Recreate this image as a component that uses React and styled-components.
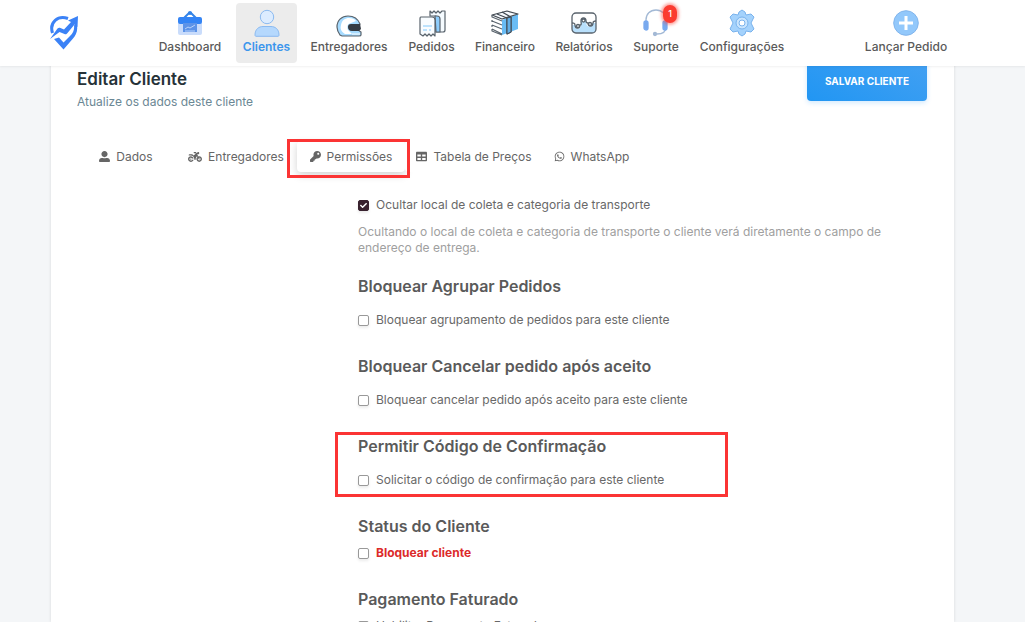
import React from "react";
import { useState } from "react";
import styled, { createGlobalStyle } from "styled-components";
import { FaUserAlt, FaKey, FaTable, FaWhatsapp, FaCheck } from "react-icons/fa";
import { FaMotorcycle } from "react-icons/fa6";

const GlobalStyle = createGlobalStyle`
  * {
    box-sizing: border-box;
  }

  body {
    margin: 0;
    background-color: #f4f6f8;
    color: #5f5f5f;
    font-family: Inter, "Open Sans", sans-serif;
    font-size: 12px;
  }

  h1, h2, p {
    margin: 0;
  }
`;

const Page = styled.div`
  display: flex;
  flex-direction: column;
  height: 100vh;
  overflow: hidden;
`;

const Header = styled.header`
  display: flex;
  flex-shrink: 0;
  align-items: flex-start;
  height: 66px;
  padding: 3px 71px 0 50px;
  background-color: #fff;
  box-shadow: 0 1px 2px rgba(0, 0, 0, 0.06);
  position: relative;
  z-index: 1;
`;

const LogoLink = styled.a`
  display: flex;
  margin: 12px 72px 0 0;
`;

const Menu = styled.nav`
  display: flex;
  flex: 1;
  gap: 6px;
`;

const MenuLink = styled.a`
  display: flex;
  flex-direction: column;
  align-items: center;
  flex: 0 0 ${props => props.$width}px;
  height: 60px;
  padding-top: 6px;
  gap: 1px;
  border-radius: 4px;
  background-color: ${props => (props.$active ? '#ececec' : 'transparent')};
  color: ${props => (props.$active ? '#3c96ec' : '#5a5a5a')};
  font-weight: ${props => (props.$active ? 600 : 500)};
  line-height: 18px;
  text-decoration: none;
  white-space: nowrap;

  &:last-child {
    margin-left: auto;
  }
`;

const IconBox = styled.span`
  display: flex;
  position: relative;
`;

const Badge = styled.span`
  position: absolute;
  top: -4px;
  right: -8px;
  width: 14px;
  height: 18px;
  border-radius: 7px;
  background-color: #fb3b30;
  box-shadow: 0 0 3px 2px rgba(251, 59, 48, 0.45);
  color: #fff;
  font-size: 9px;
  line-height: 18px;
  text-align: center;
`;

const Card = styled.main`
  flex: 1;
  min-height: 0;
  margin: -6px 71px 0 51px;
  padding: 0 27px 0 26px;
  background-color: #fff;
  box-shadow: 0 0 3px rgba(0, 0, 0, 0.12);
`;

const CardHeader = styled.div`
  display: flex;
  justify-content: space-between;
  align-items: flex-start;
`;

const Title = styled.h1`
  padding-top: 7px;
  color: #263238;
  font-size: 17px;
  font-weight: 600;
  line-height: 24px;
`;

const Subtitle = styled.p`
  padding-top: 2px;
  color: #6b8794;
  line-height: 18px;
`;

const SaveButton = styled.button`
  width: 120px;
  height: 41px;
  border: 0;
  border-radius: 4px;
  background: linear-gradient(30deg, #2196f3, #42a0f2);
  box-shadow: 0 2px 5px rgba(33, 150, 243, 0.2);
  color: #fff;
  font-family: inherit;
  font-size: 10px;
  font-weight: 700;
  cursor: pointer;
`;

const Tabs = styled.div`
  display: grid;
  grid-template-columns: 98px 122px 108px 138px 97px;
  margin-top: 30px;
`;

const Tab = styled.button`
  display: flex;
  align-items: center;
  justify-content: center;
  gap: 6px;
  width: 100%;
  height: 31px;
  padding: 0;
  border: 0;
  border-radius: 4px;
  background-color: #fff;
  box-shadow: ${props => (props.$active ? '0 3px 8px rgba(0, 0, 0, 0.18)' : 'none')};
  color: #666;
  font-family: inherit;
  font-size: 12px;
  white-space: nowrap;
  cursor: pointer;
`;

const Marked = styled.div`
  position: relative;
`;

const MarkFrame = styled.span`
  position: absolute;
  z-index: 1;
  inset: ${props => props.$inset};
  width: ${props => props.$width}px;
  border: 3px solid #fb3434;
  pointer-events: none;
`;

const Form = styled.form`
  display: flex;
  flex-direction: column;
  gap: 18px;
  max-width: 840px;
  margin-top: 24px;
  padding-left: 281px;
`;

const Intro = styled.div`
  display: flex;
  flex-direction: column;
  gap: 10px;
`;

const SectionList = styled.div`
  display: flex;
  flex-direction: column;
  gap: 25px;
`;

const Section = styled.section`
  display: flex;
  flex-direction: column;
  align-items: flex-start;
  position: relative;
  gap: ${props => (props.$compact ? 6 : 13)}px;
`;

const SectionTitle = styled.h2`
  color: #5a5a5a;
  font-size: 16px;
  font-weight: 600;
  line-height: 24px;
`;

const Option = styled.label`
  display: flex;
  align-items: center;
  gap: 7px;
  color: ${props => (props.$danger ? '#dc2a2a' : '#686868')};
  font-weight: ${props => (props.$danger ? 700 : 400)};
  line-height: 18px;
`;

const CheckWrap = styled.span`
  display: flex;
  align-items: center;
  justify-content: center;
  position: relative;

  svg {
    position: absolute;
    color: #fff;
    pointer-events: none;
  }
`;

const Checkbox = styled.input`
  appearance: none;
  width: 11px;
  height: 11px;
  margin: 0;
  border: 1px solid #999;
  border-radius: 2px;
  background-color: #fff;
  box-shadow: 0 2px 3px rgba(0, 0, 0, 0.08);

  &:checked {
    border-color: #39222f;
    background-color: #39222f;
  }
`;

const Hint = styled.p`
  color: #a0a0a0;
  line-height: 16px;
`;

function Logo() {
  return (
    <svg width="28" height="35" viewBox="0 0 28 35">
      <path d="M2.500 18C-1 7 8 0 18 3.500" fill="none" stroke="#3b82f6" strokeWidth="3" />
      <path d="M4 24L9 22.500L13.500 27.500L20 21C23.500 17.500 24.500 14 24 10.500L26.500 8C28.500 15 26 20 23 23.500L13.500 34.500Z" fill="#3b82f6" />
      <path d="M0 24L7.500 13.500C8.500 12.500 9.500 12.500 10.500 13L14 14.500L21 7L18 5.500L28 1L27.500 12L24.500 9.500L17.500 18C16.500 19.500 15.500 19.500 14.500 19L9.500 17Z" fill="#3b82f6" />
    </svg>
  );
}

function DashboardIcon() {
  return (
    <svg width="26" height="28" viewBox="0 0 26 28" fill="none">
      <path d="M7 9L12 4H14L19 9" stroke="#3384e8" strokeWidth="2" />
      <circle cx="13" cy="4" r="2" fill="#3384e8" />
      <rect x="1" y="13" width="24" height="13" rx="2" fill="#c9dcfb" />
      <rect x="1" y="8" width="24" height="7" rx="2" fill="#3384f5" />
      <rect x="6" y="14" width="14" height="9" fill="#5c93e8" />
      <path d="M8 20L11 18L13 19L18 16M8 22H18" stroke="#b9d2fa" />
    </svg>
  );
}

function ClientsIcon() {
  return (
    <svg width="26" height="28" viewBox="0 0 26 28" stroke="#8bbaf0">
      <circle cx="13" cy="8" r="6.7" fill="#dcecff" />
      <path d="M1 26C1 20 5 17.500 9 17.500H17C21 17.500 25 20 25 26C25 27 24.500 27.300 24 27.300H2C1.500 27.300 1 27 1 26Z" fill="#b5d8fd" />
    </svg>
  );
}

function HelmetIcon() {
  return (
    <svg width="26" height="28" viewBox="0 0 26 28">
      <path d="M4 26C2 23 1 21 1 18C1 11 6 7 12 7C18 7 22 10 24 15L22 21L25 23V26C25 27 24 27 23 27H6Z" fill="#a6dbff" stroke="#59636c" strokeWidth="1.200" />
      <path d="M5 16C6 11 9 9 13 9C16 9 19 10 20 12L15 14C11 15 11 18 12 21L16 25H9C5 22 4 20 5 16Z" fill="#fff" />
      <path d="M12 18C12 16 13 15 15 15H24L25 20L23 22H16C13 22 12 20 12 18Z" fill="#343b43" />
      <path d="M16 25H24" stroke="#fff" />
    </svg>
  );
}

function OrdersIcon() {
  return (
    <svg width="28" height="28" viewBox="0 0 28 28" strokeWidth="1.200" strokeLinejoin="round">
      <path d="M12 7V2L14 4L16 2L18 4L20 2L22 4L24 2L27 2V21C27 22 26 23 25 23H18V7Z" fill="#f5fbff" stroke="#59636c" />
      <path d="M17 7H19C21 7 22 8 22 10V23H18Z" fill="#8dcdfd" stroke="#59636c" />
      <path d="M3 8H14C16 8 17 9 17 11V27L15 25L13 27L11 25L9 27L7 25L5 27L2 25V10C2 9 2 8 3 8Z" fill="#f8fcff" stroke="#59636c" />
      <path d="M5 17H14M5 21H9M11 21H13" stroke="#80c7fb" />
    </svg>
  );
}

function FinanceIcon() {
  return (
    <svg width="28" height="28" viewBox="0 0 28 28" strokeLinejoin="round">
      <path d="M1 6L16 2L27 5V20L12 26L1 23Z" fill="#fff" />
      <path d="M11 11L27 5V20L11 26Z" fill="#69bcf5" />
      <path d="M1 6L16 2L27 5L11 10Z" fill="#f8fbff" stroke="#414951" strokeWidth="1.200" />
      <path d="M1 6V8L11 12M1 12L11 16M1 11V13M1 16L11 20M1 16V18M1 20L11 25M1 20V22L11 26" fill="none" stroke="#59636c" strokeWidth="1.200" />
      <path d="M6 5L16 9V25L20 23V8L11 3" fill="none" stroke="#414951" strokeWidth="1.200" />
      <path d="M16 9L20 8V23L16 25Z" fill="#62afe7" stroke="#414951" />
    </svg>
  );
}

function ReportsIcon() {
  return (
    <svg width="26" height="28" viewBox="0 0 26 28" strokeWidth="1.300">
      <rect x="1" y="4" width="24" height="20" rx="4" fill="#fff" />
      <path d="M1 16H4C4 21 10 21 10 16V13C10 9 15 9 15 13C15 19 21 19 21 14H25V20C25 23 24 24 21 24H5C2 24 1 23 1 20Z" fill="#b9e0fc" />
      <path d="M1 14C2 14 4 14 4 16C4 20 9 20 9 16C11 16 10 14 10 12C10 8 15 8 15 12C15 13 15 14 17 14C17 18 22 18 22 14C22 12 24 12 25 12" fill="none" stroke="#59636c" />
      <rect x="1" y="4" width="24" height="20" rx="4" fill="none" stroke="#59636c" />
      <g fill="#fff" stroke="#59636c">
        <circle cx="7" cy="17" r="1.500" />
        <circle cx="12.500" cy="11.500" r="1.500" />
        <circle cx="19" cy="15" r="1.500" />
      </g>
    </svg>
  );
}

function SupportIcon() {
  return (
    <svg width="26" height="28" viewBox="0 0 26 28" fill="none" stroke="#a3b9d5" strokeWidth="1.300">
      <path d="M3 14V11C3 5 7 1 13 1C19 1 23 5 23 11V18C23 22 20 25 14 25" />
      <rect x="1" y="12" width="4" height="9" rx="2" fill="#78a9ee" stroke="#78a9ee" />
      <rect x="20" y="12" width="4" height="9" rx="2" fill="#78a9ee" stroke="#78a9ee" />
      <circle cx="12" cy="25" r="1.500" fill="#a3b9d5" />
    </svg>
  );
}

function SettingsIcon() {
  return (
    <svg width="26" height="28" viewBox="0 0 26 28">
      <path d="M13 1L16 3L17 6L22 5L25 8L22 14L25 20L22 23L17 22L16 25L13 27L10 25L9 22L4 23L1 20L4 14L1 8L4 5L9 6L10 3Z" fill="#a4d2fc" stroke="#79b2ec" strokeLinejoin="round" />
      <circle cx="13" cy="14" r="6" fill="#c9e5fe" stroke="#79b2ec" />
      <circle cx="13" cy="14" r="3" fill="#fff" stroke="#79b2ec" />
    </svg>
  );
}

function AddIcon() {
  return (
    <svg width="26" height="28" viewBox="0 0 26 28">
      <circle cx="13" cy="14" r="12.300" fill="#92c8fb" stroke="#82b5ec" />
      <path d="M13 7V21M6 14H20" stroke="#fff" strokeWidth="3" />
    </svg>
  );
}

const menuItems = [
  { label: 'Dashboard', icon: DashboardIcon, width: 80 },
  { label: 'Clientes', icon: ClientsIcon, width: 61, active: true },
  { label: 'Entregadores', icon: HelmetIcon, width: 92 },
  { label: 'Pedidos', icon: OrdersIcon, width: 61 },
  { label: 'Financeiro', icon: FinanceIcon, width: 74 },
  { label: 'Relatórios', icon: ReportsIcon, width: 72 },
  { label: 'Suporte', icon: SupportIcon, width: 60, badge: 1 },
  { label: 'Configurações', icon: SettingsIcon, width: 100 },
  { label: 'Lançar Pedido', icon: AddIcon, width: 96 },
];

const tabItems = [
  { label: 'Dados', icon: FaUserAlt },
  { label: 'Entregadores', icon: FaMotorcycle, size: 14 },
  { label: 'Permissões', icon: FaKey, marked: true },
  { label: 'Tabela de Preços', icon: FaTable },
  { label: 'WhatsApp', icon: FaWhatsapp },
];

const sections = [
  { title: 'Bloquear Agrupar Pedidos', option: 'Bloquear agrupamento de pedidos para este cliente' },
  { title: 'Bloquear Cancelar pedido após aceito', option: 'Bloquear cancelar pedido após aceito para este cliente' },
  { title: 'Permitir Código de Confirmação', option: 'Solicitar o código de confirmação para este cliente', marked: true },
  { title: 'Status do Cliente', option: 'Bloquear cliente', compact: true, danger: true },
  { title: 'Pagamento Faturado', option: 'Habilitar Pagamento Faturado', compact: true },
];

function CheckOption({ label, danger, defaultChecked = false }) {
  const [checked, setChecked] = useState(defaultChecked);
  return (
    <Option $danger={danger}>
      <CheckWrap>
        <Checkbox type="checkbox" checked={checked} onChange={() => setChecked(!checked)} />
        {checked && <FaCheck size={7} />}
      </CheckWrap>
      {label}
    </Option>
  );
}

function App() {
  const [activeTab, setActiveTab] = useState('Permissões');
  return (
    <Page>
      <GlobalStyle />
      <Header>
        <LogoLink href="#" aria-label="Início"><Logo /></LogoLink>
        <Menu>
          {menuItems.map(({ label, icon: Icon, width, active, badge }) => (
            <MenuLink key={label} href="#" $width={width} $active={active}>
              <IconBox>
                <Icon />
                {badge && <Badge>{badge}</Badge>}
              </IconBox>
              {label}
            </MenuLink>
          ))}
        </Menu>
      </Header>

      <Card>
        <CardHeader>
          <div>
            <Title>Editar Cliente</Title>
            <Subtitle>Atualize os dados deste cliente</Subtitle>
          </div>
          <SaveButton type="button">SALVAR CLIENTE</SaveButton>
        </CardHeader>

        <Tabs role="tablist">
          {tabItems.map(({ label, icon: Icon, size = 11, marked }) => (
            <Marked key={label}>
              <Tab role="tab" aria-selected={activeTab === label} $active={activeTab === label} onClick={() => setActiveTab(label)}>
                <Icon size={size} />
                {label}
              </Tab>
              {marked && <MarkFrame $inset="-2px auto -6px -10px" $width={123} />}
            </Marked>
          ))}
        </Tabs>

        <Form>
          <Intro>
            <CheckOption label="Ocultar local de coleta e categoria de transporte" defaultChecked />
            <Hint>
              Ocultando o local de coleta e categoria de transporte o cliente verá diretamente o campo de endereço de entrega.
            </Hint>
          </Intro>
          <SectionList>
            {sections.map(({ title, option, compact, danger, marked }) => (
              <Section key={title} $compact={compact}>
                <SectionTitle>{title}</SectionTitle>
                <CheckOption label={option} danger={danger} />
                {marked && <MarkFrame $inset="-2px auto -8px -23px" $width={393} />}
              </Section>
            ))}
          </SectionList>
        </Form>
      </Card>
    </Page>
  );
}

export default App;
